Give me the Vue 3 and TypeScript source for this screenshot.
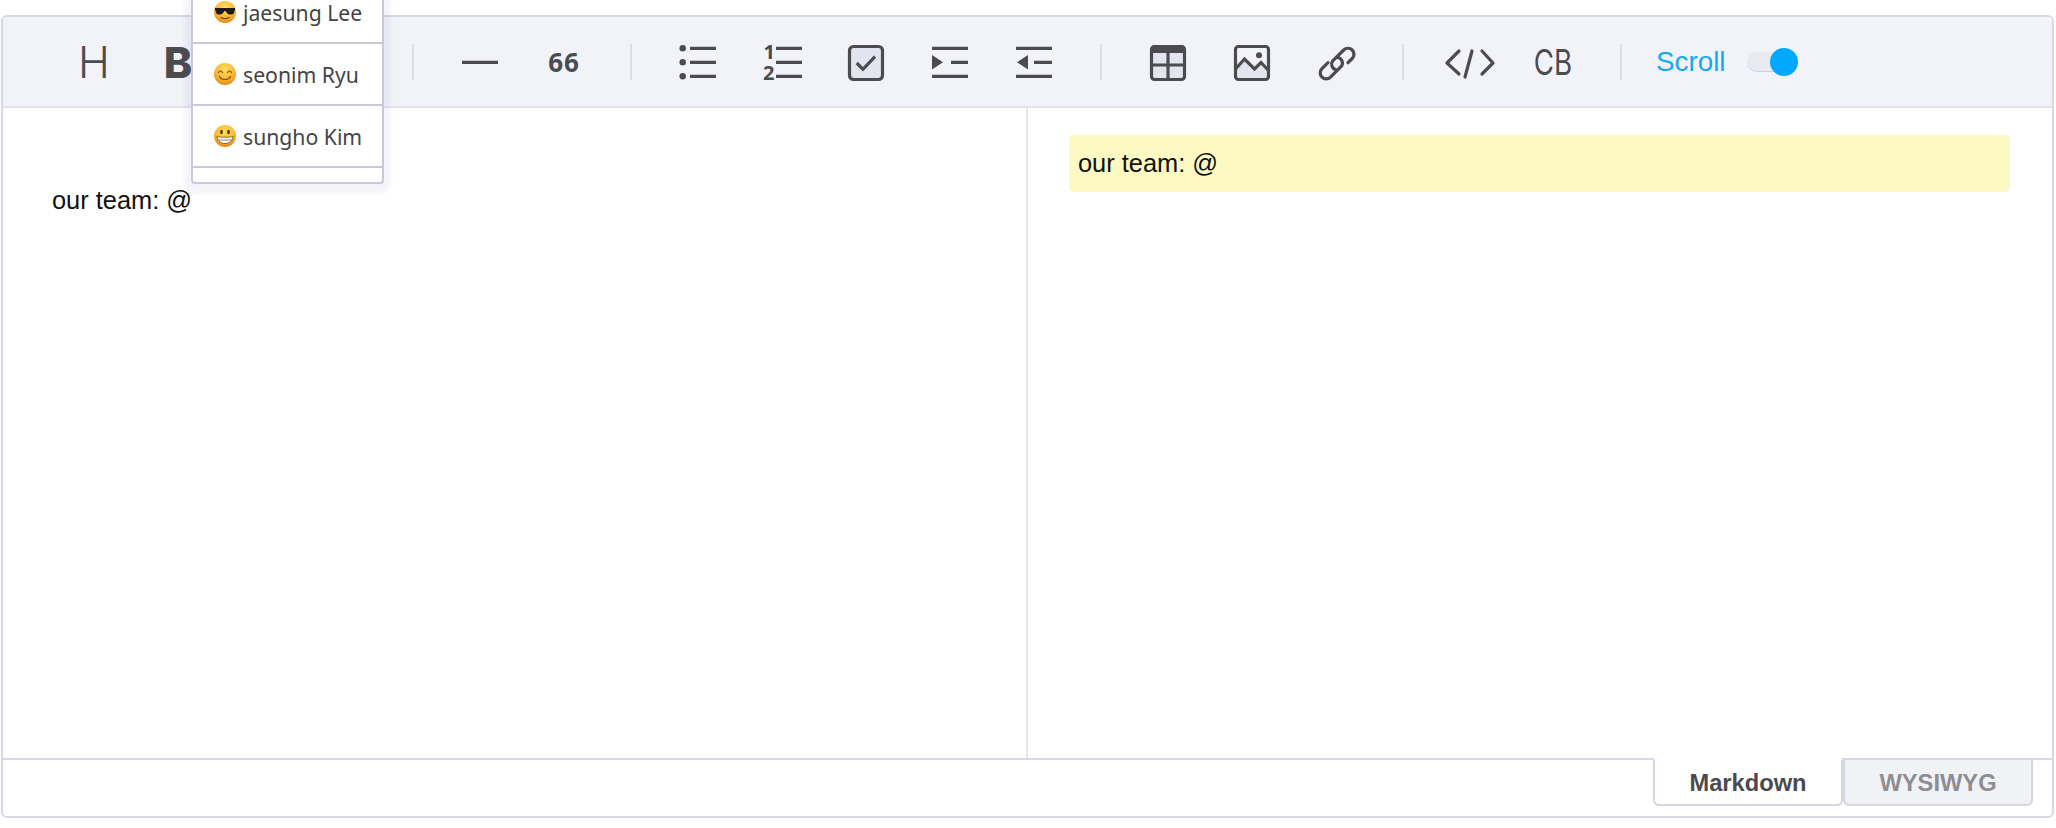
<script setup lang="ts">
interface Member {
  name: string
  mood: 'cool' | 'happy' | 'grin'
}
const members: Member[] = [
  { name: 'jaesung Lee', mood: 'cool' },
  { name: 'seonim Ryu', mood: 'happy' },
  { name: 'sungho Kim', mood: 'grin' },
]
</script>

<template>
  <div class="page">
    <section class="editor">
      <header class="toolbar">
        <span class="tool"><span class="glyph heading">H</span></span>
        <span class="tool"><span class="glyph bold">B</span></span>
        <span class="tool"><span class="glyph italic">I</span></span>
        <span class="tool"><span class="glyph strike">S</span></span>
        <i class="sep"></i>
        <span class="tool">
          <svg class="icon" viewBox="0 0 40 40"><path d="M2 20.300h36" /></svg>
        </span>
        <span class="tool"><span class="glyph quote">66</span></span>
        <i class="sep"></i>
        <span class="tool">
          <svg class="icon" viewBox="0 0 40 40">
            <circle class="solid" cx="4.700" cy="6.300" r="3.200" />
            <circle class="solid" cx="4.700" cy="20.300" r="3.200" />
            <circle class="solid" cx="4.700" cy="34.300" r="3.200" />
            <path d="M12 6.300h26M12 20.300h26M12 34.300h26" />
          </svg>
        </span>
        <span class="tool">
          <svg class="icon" viewBox="0 0 40 40">
            <text class="num" x="1.500" y="17">1</text>
            <text class="num" x="1" y="38">2</text>
            <path d="M14 6.300h26M14 20.300h26M14 34.300h26" />
          </svg>
        </span>
        <span class="tool">
          <svg class="icon" viewBox="0 0 40 40">
            <rect class="boxed" x="3.500" y="4.500" width="33" height="33" rx="4" />
            <path d="M10.700 21l6.300 6.300L29 14.700" />
          </svg>
        </span>
        <span class="tool">
          <svg class="icon" viewBox="0 0 40 40">
            <path d="M2 6.300h36M21 20.300h17M2 34.300h36" />
            <path class="solid" d="M2 13l11 7.300L2 27.500z" />
          </svg>
        </span>
        <span class="tool">
          <svg class="icon" viewBox="0 0 40 40">
            <path d="M2 6.300h36M20 20.300h18M2 34.300h36" />
            <path class="solid" d="M14 13L3 20.300l11 7.200z" />
          </svg>
        </span>
        <i class="sep"></i>
        <span class="tool">
          <svg class="icon" viewBox="0 0 40 40">
            <rect class="boxed" x="3.500" y="4.500" width="33" height="33" rx="3" />
            <path class="solid" d="M3 7a4 4 0 0 1 4-4h26a4 4 0 0 1 4 4v4H3z" />
            <path d="M20 9v28M4 23h32" />
          </svg>
        </span>
        <span class="tool">
          <svg class="icon" viewBox="0 0 40 40">
            <path class="tint" d="M3.500 27l9-10 10 10 6.500-6.500 8 8.500v8.500h-33.500z" />
            <rect x="3.500" y="4.500" width="33" height="33" rx="3" />
            <path d="M3.500 27l9-10 10 10 6.500-6.500 8 8.500" />
            <circle class="solid" cx="27" cy="13.300" r="3" />
          </svg>
        </span>
        <span class="tool">
          <svg class="icon" viewBox="0 0 40 40">
            <path class="round" d="M32 20.700l4.200-4.200A6 6 0 0 0 27.700 8L16.500 19.200a5.500 5.500 0 0 0 3 8.300" />
            <path class="round" d="M12 20.700l-6 6a6 6 0 0 0 8.500 8.500L25 24.700a5.500 5.500 0 0 0-4-9.200" />
          </svg>
        </span>
        <i class="sep"></i>
        <span class="tool">
          <svg class="icon wide" viewBox="0 0 50 40">
            <path class="round" d="M14 9L2 21l12 11M27 9l-7 26M37 9l11 12-11 11" />
          </svg>
        </span>
        <span class="tool"><span class="glyph block">CB</span></span>
        <i class="sep"></i>
        <div class="scroll">
          <span class="scroll-label">Scroll</span>
          <span class="switch"><span class="knob"></span></span>
        </div>
      </header>

      <div class="panes">
        <div class="source">our team: @</div>
        <div class="preview">
          <p class="block-line">our team: @</p>
        </div>
      </div>

      <footer class="footer">
        <button class="tab active">Markdown</button>
        <button class="tab">WYSIWYG</button>
      </footer>
    </section>

    <ul class="mentions">
      <li v-for="m in members" :key="m.name" class="mention">
        <svg class="emoji" viewBox="0 0 22 22">
          <defs>
            <radialGradient id="face" cx="50%" cy="30%" r="75%">
              <stop offset="0%" stop-color="#ffdf5e" />
              <stop offset="60%" stop-color="#fab532" />
              <stop offset="100%" stop-color="#e07f14" />
            </radialGradient>
          </defs>
          <circle cx="11" cy="11" r="11" fill="url(#face)" />
          <template v-if="m.mood === 'cool'">
            <path d="M1 7h20v1.500l-1.500 4c-1 1.500-5 1.500-6.500-.5L11.500 10h-1L9 12c-1.500 2-5.500 2-6.500.5L1 8.500z" fill="#1c1c1c" />
            <path d="M7 16.500c2 1.500 6 1.500 8 0" class="mouth" />
          </template>
          <template v-else-if="m.mood === 'happy'">
            <path d="M4.500 9.500c1-2 3-2 4 0M13.500 9.500c1-2 3-2 4 0" class="mouth" />
            <path d="M5.500 13.500c2 4 9 4 11 0" class="mouth" />
          </template>
          <template v-else>
            <ellipse cx="7.500" cy="7" rx="1.300" ry="2.200" fill="#4a3410" />
            <ellipse cx="14.500" cy="7" rx="1.300" ry="2.200" fill="#4a3410" />
            <path d="M3 11.500c3 1 13 1 16 0 0 4-3.500 7-8 7s-8-3-8-7z" fill="#fff" stroke="#6b4a14" stroke-width=".8" />
            <path d="M4.500 15h13" class="mouth thin" />
          </template>
        </svg>
        <span>{{ m.name }}</span>
      </li>
      <li class="mention spare"></li>
    </ul>
  </div>
</template>

<style scoped>
.page {
  position: relative;
  width: 2056px;
  height: 828px;
  overflow: hidden;
  background: #fff;
  box-sizing: border-box;
  padding: 15px 2px 0 1px;
}
.editor {
  display: flex;
  flex-direction: column;
  height: 803px;
  box-sizing: border-box;
  border: 2px solid #d8d8e8;
  border-radius: 6px;
  overflow: hidden;
}
.toolbar {
  display: flex;
  align-items: center;
  flex: none;
  height: 91px;
  box-sizing: border-box;
  padding-left: 49px;
  background: #f2f3f8;
  border-bottom: 2px solid #e2e3ec;
  color: #4b4b50;
}
.tool {
  flex: none;
  display: flex;
  align-items: center;
  justify-content: center;
  width: 84px;
  height: 40px;
}
.sep {
  flex: none;
  width: 2px;
  height: 36px;
  margin: 0 24px;
  background: #dcdde6;
}
.icon {
  width: 40px;
  height: 40px;
  flex: none;
  fill: none;
  stroke: #4b4b50;
  stroke-width: 3.200;
  overflow: visible;
}
.icon.wide {
  width: 50px;
}
.round {
  stroke-linecap: round;
  stroke-linejoin: round;
}
.solid {
  fill: #4b4b50;
  stroke: none;
}
.boxed {
  fill: #e3e5ee;
}
.tint {
  fill: #e3e5ee;
  stroke: none;
}
.num {
  font: 700 20px "Noto Sans", sans-serif;
  fill: #4b4b50;
  stroke: none;
}
.glyph {
  display: inline-block;
  line-height: 1;
}
.heading {
  font: 300 43px Inter, sans-serif;
}
.bold {
  font: 800 43px Inter, sans-serif;
}
.italic {
  font: italic 400 40px Inter, sans-serif;
}
.strike {
  font: 400 40px Inter, sans-serif;
  text-decoration: line-through;
}
.quote {
  font: 700 26px "Noto Sans", sans-serif;
  letter-spacing: 1px;
}
.block {
  font: 400 36px Inter, sans-serif;
  transform: translateX(-1px) scaleX(0.77);
}
.scroll {
  display: flex;
  align-items: center;
  margin-left: 10px;
}
.scroll-label {
  font: 27.800px "Liberation Sans", Arial, sans-serif;
  color: #14a8f8;
}
.switch {
  position: relative;
  width: 38px;
  height: 19px;
  margin-left: 21px;
  border-radius: 10px;
  background: #e9eaf1;
  border-bottom: 1px solid #cfcfe6;
}
.knob {
  position: absolute;
  right: -13px;
  top: -4px;
  width: 28px;
  height: 28px;
  border-radius: 50%;
  background: #00a9ff;
}
.panes {
  flex: 1;
  display: grid;
  grid-template-columns: 1023px 1fr;
  min-height: 0;
}
.source {
  padding: 72px 0 0 49px;
  font: 25.400px/40px "Liberation Sans", Arial, sans-serif;
  color: #111;
}
.preview {
  border-left: 2px solid #e3e4ee;
  padding: 27px 42px 0 41px;
}
.block-line {
  margin: 0;
  height: 57px;
  padding-left: 9px;
  border-radius: 5px;
  background: #fdf9c3;
  font: 25.400px/57px "Liberation Sans", Arial, sans-serif;
  color: #111;
}
.footer {
  flex: none;
  display: flex;
  justify-content: flex-end;
  align-items: flex-start;
  height: 58px;
  box-sizing: border-box;
  padding-right: 19px;
  border-top: 2px solid #d8d8e8;
}
.tab {
  width: 190px;
  height: 48px;
  margin-top: -2px;
  padding: 3px 0 0;
  box-sizing: border-box;
  border: 2px solid #d5d5e4;
  border-radius: 0 0 6px 6px;
  background: #f1f2f6;
  font: 700 23.700px "Liberation Sans", Arial, sans-serif;
  color: #8d8d93;
}
.tab.active {
  background: #fff;
  border-top-color: #fff;
  color: #4b4b4f;
}
.mentions {
  position: absolute;
  left: 191px;
  top: -18px;
  width: 193px;
  margin: 0;
  padding: 0;
  box-sizing: border-box;
  list-style: none;
  background: #fff;
  border: 2px solid #c9c9d9;
  border-top: 0;
  border-radius: 0 0 4px 4px;
  box-shadow: 0 3px 4px 6px rgba(90, 90, 150, 0.07);
}
.mention {
  display: flex;
  align-items: center;
  gap: 7px;
  height: 62px;
  box-sizing: border-box;
  padding: 0 0 0 21px;
  border-bottom: 2px solid #c9c9d9;
  font: 21.200px "Noto Sans", sans-serif;
  color: #444;
}
.mention.spare {
  height: 14px;
  border-bottom: 0;
}
.emoji {
  width: 22px;
  height: 22px;
  flex: none;
}
.mouth {
  fill: none;
  stroke: #6b4a14;
  stroke-width: 1.200;
  stroke-linecap: round;
}
.mouth.thin {
  stroke-width: 0.700;
}
</style>
